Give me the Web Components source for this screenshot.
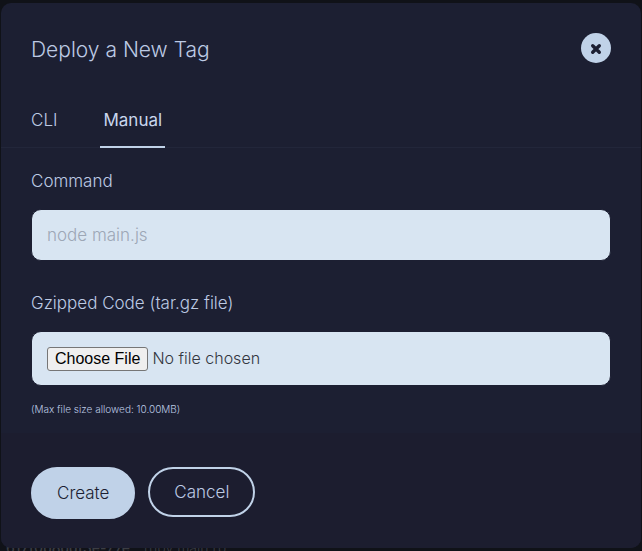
<!DOCTYPE html>
<html lang="en">
<head>
<meta charset="utf-8">
<meta name="viewport" content="width=device-width, initial-scale=1">
<title>Deploy a New Tag</title>
<style>
:root {
    --panel:#1c1f32;
    --footer:#1c1d2f;
    --accent:#c0d2e8;
    --field:#d8e5f2;
    --ink:#1c1f32;
    --text:#bdcae4;
}
* {box-sizing:border-box;}
body {
    margin:0; height:100vh; padding:3px 1px 0; overflow:hidden;
    background:#101218; color:var(--text);
    font:300 17px/24px Inter,"Liberation Sans",sans-serif;
}
</style>
</head>
<body>
<deploy-dialog>
    <span slot="title">Deploy a New Tag</span>
    <tab-bar slot="tabs" tabs="CLI,Manual" selected="Manual"></tab-bar>
    <form-field label="Command" placeholder="node main.js"></form-field>
    <form-field label="Gzipped Code (tar.gz file)" type="file">(Max file size allowed: 10.00MB)</form-field>
    <pill-button slot="actions" primary>Create</pill-button>
    <pill-button slot="actions">Cancel</pill-button>
</deploy-dialog>
<tag-row><b>617f0b8ddf3e-77e</b><span>ruby main.rb</span></tag-row>

<script>
class DeployDialog extends HTMLElement {
    constructor() {
        super();
        this.attachShadow({mode: 'open'}).innerHTML = `
        <section role="dialog" aria-labelledby="title">
            <header>
                <h2 id="title"><slot name="title"></slot></h2>
                <button type="button" aria-label="Close">
                    <svg viewBox="0 0 12 12" aria-hidden="true"><path d="M2.7 2.7 9.3 9.3M9.3 2.7 2.7 9.3"/></svg>
                </button>
            </header>
            <slot name="tabs"></slot>
            <main><slot></slot></main>
            <footer><slot name="actions"></slot></footer>
        </section>
        <style>
        :host {display:block; position:relative; z-index:1;}
        section {background:var(--panel); border-radius:10px; overflow:hidden;}
        header {
            display:flex; justify-content:space-between; align-items:flex-start;
            padding:30px 30px 0;
        }
        h2 {margin:0; font-size:21px; font-weight:300; line-height:34px;}
        button {
            display:flex; align-items:center; justify-content:center;
            width:30px; height:30px; padding:0;
            border:0; border-radius:50%;
            background:var(--accent); cursor:pointer;
        }
        svg {width:12px; height:12px; margin-top:2px;}
        path {fill:none; stroke:var(--ink); stroke-width:3.4; stroke-linecap:round;}
        main {
            display:flex; flex-direction:column; gap:30px;
            padding:21px 30px 16px;
        }
        footer {
            display:flex; align-items:flex-start; gap:13px;
            padding:34px 30px 29px;
            background:var(--footer);
        }
        </style>`;
    }
}

class TabBar extends HTMLElement {
    constructor() {
        super();
        this.attachShadow({mode: 'open'});
    }
    connectedCallback() {
        let selected = this.getAttribute('selected');
        this.shadowRoot.innerHTML = `
        <nav role="tablist">${this.getAttribute('tabs').split(',').map(tab => 
            `<button type="button" role="tab" aria-selected="${tab == selected}">${tab}</button>`
        ).join('')}</nav>
        <style>
        :host {display:block;}
        nav {
            display:flex; gap:40px;
            padding:38px 27px 0;
            box-shadow:inset 0 -1px #22263a;
        }
        button {
            padding:3px 3px 14px;
            border:0; border-bottom:2px solid transparent;
            background:none; color:inherit; font:inherit; cursor:pointer;
        }
        [aria-selected=true] {border-color:var(--accent); color:#cad7ee; font-weight:400;}
        </style>`;
        this.shadowRoot.querySelector('nav').onclick = ({ target }) => target.matches('button') &&
            this.shadowRoot.querySelectorAll('button').forEach(b => b.setAttribute('aria-selected', b == target));
    }
}

class FormField extends HTMLElement {
    constructor() {
        super();
        this.attachShadow({mode: 'open'});
    }
    connectedCallback() {
        this.shadowRoot.innerHTML = `
        <label for="input">${this.getAttribute('label')}</label>
        <input id="input" type="${this.getAttribute('type') ?? 'text'}" placeholder="${this.getAttribute('placeholder') ?? ''}">
        <small><slot></slot></small>
        <style>
        :host {display:block;}
        label {display:block; margin-bottom:16px;}
        input {
            display:block; box-sizing:border-box; width:100%; height:52px;
            padding:0 15px;
            border:1px solid var(--ink); border-radius:10px;
            background:var(--field); color:#33363f; font:inherit;
        }
        input[type=file] {height:auto; padding:14px 15px; font-size:16px;}
        ::placeholder {color:#9da7b6; opacity:1;}
        ::file-selector-button {
            height:24px; margin:0 4px 0 0; padding:0 7px;
            border:1px solid #767676; border-radius:3px;
            background:#efefef; color:#000;
            font:400 16px/20px "Liberation Sans",sans-serif;
        }
        small {display:block; font-size:10px; line-height:16px; margin-top:15px;}
        :host(:empty) small {display:none;}
        </style>`;
    }
}

class PillButton extends HTMLElement {
    constructor() {
        super();
        this.attachShadow({mode: 'open'}).innerHTML = `
        <button type="button"><slot></slot></button>
        <style>
        :host {display:block;}
        button {
            padding:11px 24px;
            border:2px solid var(--accent); border-radius:26px;
            background:none; color:inherit; font:inherit; cursor:pointer;
        }
        :host([primary]) button {padding:12px 24px; background:var(--accent); color:var(--ink);}
        </style>`;
    }
}

// row of the tag list that the dialog lies over
class TagRow extends HTMLElement {
    constructor() {
        super();
        this.attachShadow({mode: 'open'}).innerHTML = `
        <slot></slot>
        <style>
        :host {
            display:flex; gap:14px;
            margin-top:-10px; padding:0 5px;
            color:#3b3d43; font-size:14px; line-height:20px;
        }
        ::slotted(b) {font-weight:500;}
        </style>`;
    }
}

customElements.define('deploy-dialog', DeployDialog);
customElements.define('tab-bar', TabBar);
customElements.define('form-field', FormField);
customElements.define('pill-button', PillButton);
customElements.define('tag-row', TagRow);
</script>
</body>
</html>
